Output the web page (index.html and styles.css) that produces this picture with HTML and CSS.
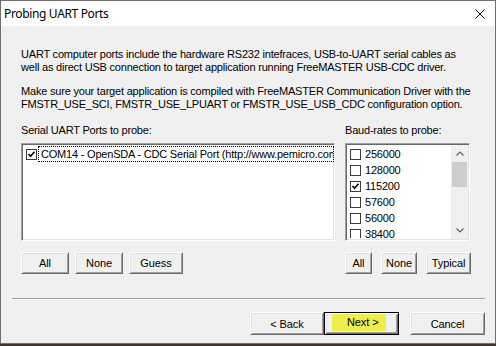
FILE: index.html
```html
<!DOCTYPE html>
<html lang="en">
<head>
  <meta charset="UTF-8">
  <title>Probing UART Ports</title>
  <link rel="stylesheet" href="styles.css">
</head>
<body>

<div class="window">
  <div class="title-bar">
    <span class="title">Probing UART Ports</span>
    <span class="close">
      <svg width="10" height="10" viewBox="0 0 10 10"><path d="M0.5 0.5L9.5 9.5M9.5 0.5L0.5 9.5" stroke="#000" stroke-width="1"/></svg>
    </span>
  </div>

  <div class="dialog">
    <div class="content">
      <p class="intro">UART computer ports include the hardware RS232 intefraces, USB-to-UART serial cables as<br>well as direct USB connection to target application running FreeMASTER USB-CDC driver.</p>
      <p class="intro">Make sure your target application is compiled with FreeMASTER Communication Driver with the<br>FMSTR_USE_SCI, FMSTR_USE_LPUART or FMSTR_USE_USB_CDC configuration option.</p>

      <div class="probe">
        <div class="ports">
          <div class="label">Serial UART Ports to probe:</div>
          <div class="listbox">
            <div class="item">
              <span class="check"><svg width="9" height="9" viewBox="0 0 9 9"><path d="M1.5 4L3.5 6.2L7.5 1.8" fill="none" stroke="#000" stroke-width="1.6"/></svg></span>
              <span class="item-text focused">COM14 - OpenSDA - CDC Serial Port (http://www.pemicro.com/opensda)</span>
            </div>
          </div>
          <div class="buttons">
            <button class="btn w48">All</button>
            <button class="btn w48">None</button>
            <button class="btn w54">Guess</button>
          </div>
        </div>

        <div class="bauds">
          <div class="label">Baud-rates to probe:</div>
          <div class="listbox baud-list">
            <div class="items">
              <div class="item"><span class="check"></span><span class="item-text">256000</span></div>
              <div class="item"><span class="check"></span><span class="item-text">128000</span></div>
              <div class="item"><span class="check"><svg width="9" height="9" viewBox="0 0 9 9"><path d="M1.5 4L3.5 6.2L7.5 1.8" fill="none" stroke="#000" stroke-width="1.6"/></svg></span><span class="item-text">115200</span></div>
              <div class="item"><span class="check"></span><span class="item-text">57600</span></div>
              <div class="item"><span class="check"></span><span class="item-text">56000</span></div>
              <div class="item"><span class="check"></span><span class="item-text">38400</span></div>
            </div>
            <div class="scrollbar">
              <div class="arrow"><svg width="8" height="5" viewBox="0 0 8 5"><path d="M0.5 4.5L4 1L7.5 4.5" fill="none" stroke="#606060" stroke-width="1.2"/></svg></div>
              <div class="thumb"></div>
              <div class="track"></div>
              <div class="arrow"><svg width="8" height="5" viewBox="0 0 8 5"><path d="M0.5 0.5L4 4L7.5 0.5" fill="none" stroke="#606060" stroke-width="1.2"/></svg></div>
            </div>
          </div>
          <div class="buttons wide-gap">
            <button class="btn w27">All</button>
            <button class="btn w36">None</button>
            <button class="btn w45">Typical</button>
          </div>
        </div>
      </div>
    </div>

    <div class="separator"></div>

    <div class="footer">
      <button class="btn w74">&lt; Back</button>
      <button class="btn w75 default"><span class="marker">Next &gt;</span></button>
      <button class="btn w75 cancel">Cancel</button>
    </div>
  </div>
</div>

</body>
</html>
```

FILE: styles.css
```css
body {
  margin: 0;
  background-color: #3e3428;
  font-family: "Liberation Sans", Arial, sans-serif;
  font-size: 11px;
  letter-spacing: -0.2px;
  color: #000;
}
.window {
  width: 496px;
  height: 344px;
  box-sizing: border-box;
  border: 1px solid #6e6e6e;
  background-color: #f0f0f0;
}
.title-bar {
  height: 25px;
  background-color: #fff;
  display: flex;
  align-items: center;
  justify-content: space-between;
  padding-left: 3px;
}
.title {
  font-family: "Noto Sans", sans-serif;
  font-size: 12px;
  letter-spacing: -0.35px;
}
.close {
  width: 30px;
  height: 25px;
  display: flex;
  align-items: center;
  justify-content: center;
}
.content {
  padding: 22px 0 0 20px;
}
.intro {
  margin: 0;
  line-height: 13px;
  white-space: nowrap;
}
.intro + .intro {
  margin-top: 11px;
}
.probe {
  display: flex;
  gap: 10px;
  margin-top: 13px;
}
.ports {
  width: 314px;
}
.bauds {
  width: 126px;
}
.label {
  line-height: 13px;
  margin-bottom: 6px;
  white-space: nowrap;
}
.listbox {
  height: 98px;
  box-sizing: border-box;
  border: 1px solid;
  border-color: #a0a0a0 #fff #fff #a0a0a0;
  box-shadow: inset 1px 1px #696969, inset -1px -1px #e3e3e3;
  background-color: #fff;
  padding: 2px 1px 2px 2px;
  overflow: hidden;
}
.baud-list {
  width: 125px;
  display: flex;
  padding-right: 1px;
}
.items {
  flex: 1;
  overflow: hidden;
}
.item {
  height: 16px;
  display: flex;
  align-items: center;
  padding-left: 2px;
  white-space: nowrap;
}
.check {
  width: 11px;
  height: 11px;
  box-sizing: border-box;
  border: 1px solid #3c3c3c;
  background-color: #fff;
  display: flex;
  align-items: center;
  justify-content: center;
  flex-shrink: 0;
}
.item-text {
  margin-left: 2px;
  padding: 0 2px;
  line-height: 14px;
}
.item-text.focused {
  flex: 1;
  overflow: hidden;
  outline: 1px dotted #000;
  outline-offset: 0;
  height: 14px;
}
.scrollbar {
  width: 17px;
  height: 94px;
  margin-top: -1px;
  background-color: #f0f0f0;
  display: flex;
  flex-direction: column;
}
.arrow {
  height: 17px;
  display: flex;
  align-items: center;
  justify-content: center;
}
.thumb {
  height: 25px;
  margin: 0 1px;
  background-color: #cdcdcd;
}
.track {
  flex: 1;
}
.buttons {
  display: flex;
  gap: 6px;
  margin-top: 11px;
}
.buttons.wide-gap {
  gap: 9px;
}
.btn {
  height: 22px;
  box-sizing: border-box;
  padding: 0;
  font-family: "Liberation Sans", Arial, sans-serif;
  font-size: 11px;
  letter-spacing: -0.1px;
  color: #000;
  background-color: #f0f0f0;
  border: 1px solid;
  border-color: #fff #696969 #696969 #fff;
  box-shadow: inset 1px 1px #e3e3e3, inset -1px -1px #a0a0a0;
}
.w27 { width: 27px; }
.w36 { width: 36px; }
.w45 { width: 45px; }
.w48 { width: 48px; }
.w54 { width: 54px; }
.w74 { width: 74px; }
.w75 { width: 75px; }
.separator {
  margin: 24px 10px 0 11px;
  border-top: 1px solid #a0a0a0;
  border-bottom: 1px solid #fff;
}
.footer {
  display: flex;
  justify-content: flex-end;
  padding-right: 10px;
  margin-top: 12px;
}
.footer .btn {
  height: 23px;
}
.btn.default {
  border: 1px solid #000;
  box-shadow: inset 1px 1px #fff, inset -1px -1px #696969, inset 2px 2px #e3e3e3, inset -2px -2px #a0a0a0;
  padding: 1px 12px 3px 7px;
  display: flex;
}
.marker {
  display: block;
  flex: 1;
  background-color: #eded4e;
  text-align: left;
  padding-left: 15px;
  line-height: 17px;
}
.cancel {
  margin-left: 11px;
}
```
